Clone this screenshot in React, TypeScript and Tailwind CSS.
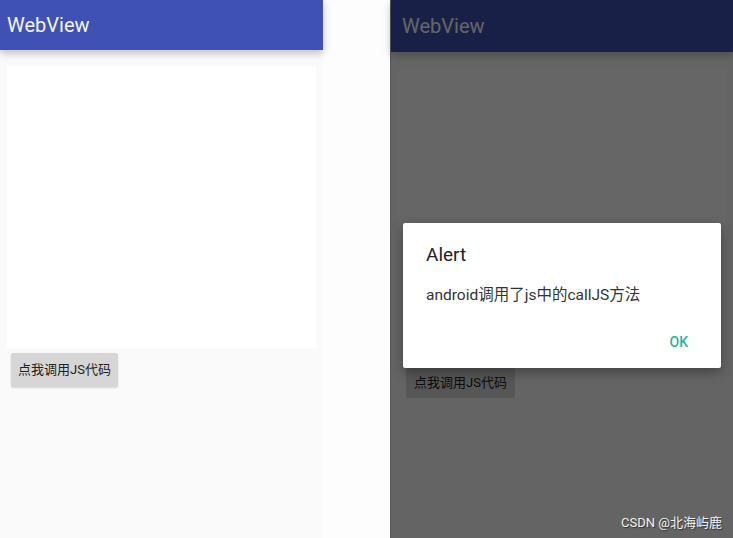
import React from "react";

const font = {
  fontFamily: 'Roboto, "Noto Sans CJK SC", sans-serif',
};

const LeftPhone: React.FC = () => (
  <div className="w-[323px] h-full bg-[#fafafa] flex flex-col">
    <div className="h-[50px] bg-[#3f51b5] flex items-center pl-[7px] shadow-[0_3px_8px_rgba(0,0,0,0.25)] relative z-10">
      <span className="text-[20px] text-[#f4f4f8]">WebView</span>
    </div>
    <div className="px-[7px] pt-[16px]">
      <div className="h-[282px] bg-white" />
    </div>
    <div className="pl-[11px] pt-[5px]">
      <button className="h-[34px] px-[7px] bg-[#d6d6d6] text-[13px] text-[#222] rounded-[2px] shadow-[0_1px_2px_rgba(0,0,0,0.15)]">
        点我调用JS代码
      </button>
    </div>
  </div>
);

const RightPhone: React.FC = () => (
  <div className="relative flex-1 h-full bg-[#fafafa] flex flex-col border-l border-[#555]">
    <div className="h-[52px] bg-[#3f51b5] flex items-center pl-[11px] shadow-[0_3px_8px_rgba(0,0,0,0.25)] relative z-10">
      <span className="text-[20px] text-[#fcfcff]">WebView</span>
    </div>
    <div className="px-[7px] pt-[17px]">
      <div className="h-[297px] bg-white" />
    </div>
    <div className="pl-[15px] pt-[2px]">
      <button className="h-[30px] px-[8px] bg-[#d6d6d6] text-[13px] text-[#222] rounded-[2px]">
        点我调用JS代码
      </button>
    </div>

    {/* dim overlay */}
    <div className="absolute inset-0 z-20 bg-black/60" />

    {/* alert dialog */}
    <div className="absolute z-30 left-[12px] top-[223px] w-[318px] h-[145px] bg-white rounded-[2px] shadow-[0_4px_12px_rgba(0,0,0,0.35)] flex flex-col px-[23px] pt-[19px]">
      <div className="text-[19px] leading-[26px] text-[#222]">Alert</div>
      <div className="mt-[16px] text-[15.5px] leading-[22px] text-[#333]">
        android调用了js中的callJS方法
      </div>
      <div className="mt-[26px] flex justify-end pr-[10px]">
        <span className="text-[14px] font-medium text-[#2bb3a0]">OK</span>
      </div>
    </div>

    {/* watermark */}
    <div className="absolute z-40 right-[11px] bottom-[6px] text-[13px] text-[#f2f2f2] [text-shadow:1px_1px_1px_rgba(0,0,0,0.5)]">
      CSDN @北海屿鹿
    </div>
  </div>
);

export default function App() {
  return (
    <div className="w-[733px] h-[538px] flex bg-[#fdfdfd] overflow-hidden" style={font}>
      <LeftPhone />
      <div className="w-[67px] h-full bg-[#fdfdfd]" />
      <RightPhone />
    </div>
  );
}
